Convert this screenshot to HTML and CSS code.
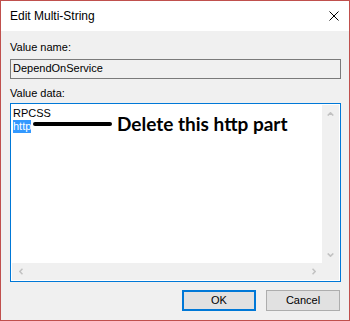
FILE: index.html
```html
<!DOCTYPE html>
<html>
<head>
<meta charset="utf-8">
<link rel="stylesheet" href="styles.css">
</head>
<body>
<div class="window">
  <div class="titlebar">
    <span class="title">Edit Multi-String</span>
    <svg class="close" width="10" height="10" viewBox="0 0 10 10"><path d="M0.5 0.5 L9.5 9.5 M9.5 0.5 L0.5 9.5" stroke="#000" stroke-width="1" fill="none"/></svg>
  </div>
  <div class="body">
    <div class="label label-name">Value name:</div>
    <div class="field">DependOnService</div>
    <div class="label label-data">Value data:</div>
    <div class="editor">
      <div class="editor-text">
        <div class="line">RPCSS</div>
        <div class="line"><span class="sel">http</span></div>
        <div class="annotation">
          <span class="arrow-line"></span>
          <span class="note">Delete this http part</span>
        </div>
      </div>
      <div class="vscroll">
        <span class="arrow"><svg width="7" height="4" viewBox="0 0 7 4"><polyline points="0.7,3.5 3.5,0.8 6.3,3.5" stroke="#c2c2c2" stroke-width="1.6" fill="none"/></svg></span>
        <span class="arrow"><svg width="7" height="4" viewBox="0 0 7 4"><polyline points="0.7,0.5 3.5,3.2 6.3,0.5" stroke="#c2c2c2" stroke-width="1.6" fill="none"/></svg></span>
      </div>
      <div class="hscroll">
        <span class="arrow"><svg width="4" height="7" viewBox="0 0 4 7"><polyline points="3.5,0.7 0.8,3.5 3.5,6.3" stroke="#c2c2c2" stroke-width="1.6" fill="none"/></svg></span>
        <span class="arrow"><svg width="4" height="7" viewBox="0 0 4 7"><polyline points="0.5,0.7 3.2,3.5 0.5,6.3" stroke="#c2c2c2" stroke-width="1.6" fill="none"/></svg></span>
      </div>
      <div class="corner"></div>
    </div>
    <div class="buttons">
      <button class="btn btn-default">OK</button>
      <button class="btn">Cancel</button>
    </div>
  </div>
</div>
</body>
</html>
```
FILE: styles.css
```css
html, body {
  margin: 0;
  padding: 0;
  width: 350px;
  height: 321px;
  overflow: hidden;
  background: #f0f0f0;
}

.window {
  box-sizing: border-box;
  width: 350px;
  height: 321px;
  border: 1px solid #c0504d;
  display: flex;
  flex-direction: column;
  background: #f0f0f0;
  font-family: "Liberation Sans", Arial, sans-serif;
  font-size: 11px;
  color: #000;
}

.titlebar {
  height: 30px;
  flex: none;
  background: #fff;
  display: flex;
  align-items: center;
  justify-content: space-between;
  padding: 0 10px 0 9px;
}

.title {
  font-size: 12px;
  line-height: 15px;
}

.close {
  display: block;
}

.body {
  flex: 1;
  display: flex;
  flex-direction: column;
  padding: 10px 8px 0 9px;
}

.label {
  line-height: 13px;
  height: 13px;
}

.field {
  box-sizing: border-box;
  margin-top: 5px;
  height: 20px;
  border: 1px solid #7a7a7a;
  background: #f0f0f0;
  padding: 2px 0 0 2px;
  line-height: 13px;
}

.label-data {
  margin-top: 8px;
}

.editor {
  box-sizing: border-box;
  margin-top: 3px;
  height: 179px;
  border: 1px solid #0078d7;
  padding: 1px;
  background: #fff;
  display: grid;
  grid-template-columns: 1fr 17px;
  grid-template-rows: 1fr 17px;
}

.editor-text {
  position: relative;
  padding: 2px 0 0 1px;
  line-height: 13px;
}

.line {
  height: 13px;
  white-space: nowrap;
}

.sel {
  display: inline-block;
  height: 13px;
  background: #3399ff;
  color: #fff;
}

.annotation {
  position: absolute;
  left: 21px;
  top: 10px;
  display: flex;
  align-items: center;
  gap: 5px;
}

.arrow-line {
  display: block;
  width: 79px;
  height: 4px;
  border-radius: 2px;
  background: #000;
  margin-top: 0px;
}

.note {
  font-family: Lato, "Open Sans", sans-serif;
  font-weight: 700;
  font-size: 19px;
  line-height: 18px;
  color: #000;
  white-space: nowrap;
}

.vscroll {
  background: #f0f0f0;
  display: flex;
  flex-direction: column;
  justify-content: space-between;
}

.hscroll {
  background: #f0f0f0;
  display: flex;
  justify-content: space-between;
}

.arrow {
  width: 17px;
  height: 17px;
  display: flex;
  align-items: center;
  justify-content: center;
}

.arrow svg {
  display: block;
}

.corner {
  background: #f0f0f0;
}

.buttons {
  display: flex;
  justify-content: flex-end;
  gap: 10px;
  margin-top: 8px;
  padding-right: 1px;
}

.btn {
  box-sizing: border-box;
  width: 74px;
  height: 21px;
  margin: 0;
  padding: 0;
  background: #e1e1e1;
  border: 1px solid #adadad;
  font-family: "Liberation Sans", Arial, sans-serif;
  font-size: 11px;
  color: #000;
  line-height: 13px;
}

.btn-default {
  border: 2px solid #0078d7;
}
```
